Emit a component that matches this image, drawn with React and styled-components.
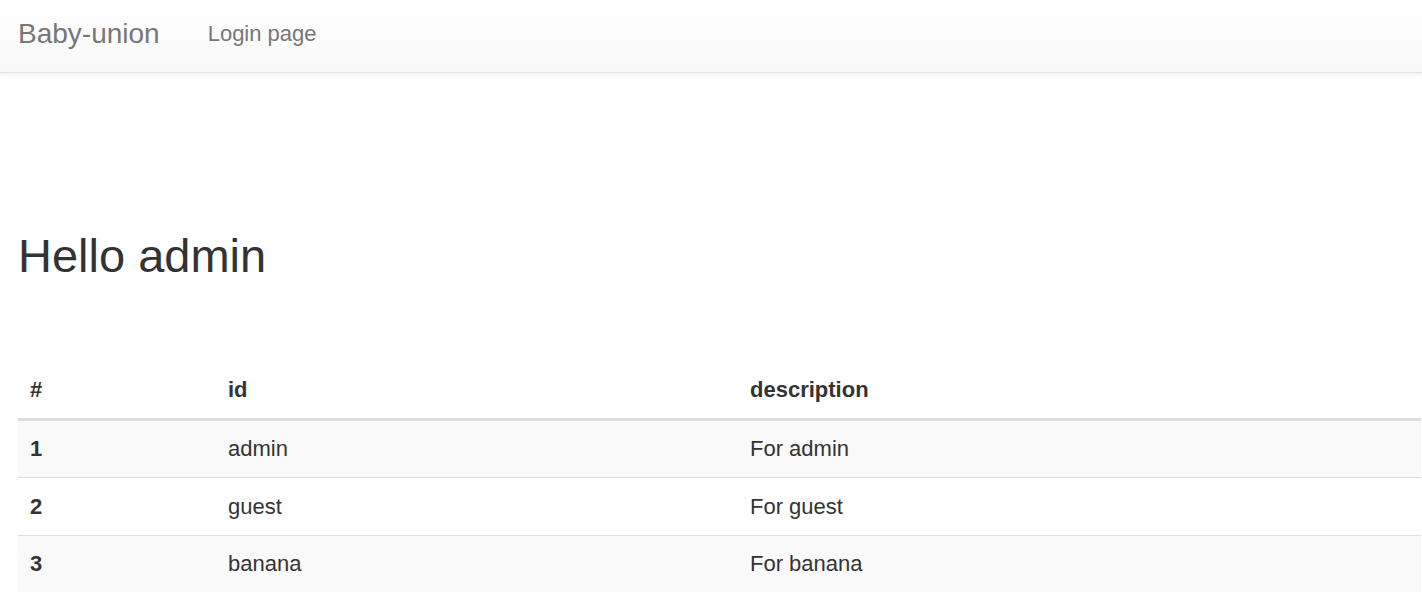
import React from 'react';
import styled, { createGlobalStyle } from 'styled-components';

const GlobalStyle = createGlobalStyle`
  html, body {
    margin: 0;
    padding: 0;
    background: #fff;
  }
  body {
    font-family: 'Liberation Sans', Arial, sans-serif;
    color: #333;
  }
`;

const Navbar = styled.nav`
  display: flex;
  align-items: flex-start;
  height: 72px;
  padding-left: 18px;
  background-image: linear-gradient(to bottom, #ffffff 0%, #f8f8f8 100%);
  border-bottom: 1px solid #e4e4e4;
  box-shadow: inset 0 1px 0 rgba(255, 255, 255, 0.15), 0 1px 5px rgba(0, 0, 0, 0.075);
`;

const Brand = styled.a`
  padding-top: 20px;
  font-size: 28px;
  line-height: 28px;
  color: #777;
  text-decoration: none;
`;

const NavLink = styled.a`
  margin-left: 48px;
  padding-top: 23px;
  font-size: 22px;
  line-height: 22px;
  color: #777;
  text-decoration: none;
`;

const Main = styled.main`
  padding: 0 1px 0 18px;
`;

const Title = styled.h1`
  margin: 157px 0 79.5px;
  font-size: 47px;
  font-weight: 400;
  line-height: 1.1;
  color: #333;
`;

const Table = styled.table`
  width: 100%;
  border-collapse: collapse;
  border-spacing: 0;
  font-size: 22px;
  line-height: 31.5px;
  table-layout: fixed;
`;

const HeadCell = styled.th`
  box-sizing: border-box;
  width: ${({ $width }) => $width || 'auto'};
  padding: 12.5px 12px;
  text-align: left;
  font-weight: 700;
  vertical-align: bottom;
  border-bottom: 3px solid #ddd;
`;

const Row = styled.tr`
  background: ${({ $striped }) => ($striped ? '#f9f9f9' : '#fff')};
`;

const RowHead = styled.th`
  padding: 12.5px 12px;
  text-align: left;
  font-weight: 700;
  border-top: ${({ $divided }) => ($divided ? '1px solid #ddd' : 'none')};
`;

const Cell = styled.td`
  padding: 12.5px 12px;
  border-top: ${({ $divided }) => ($divided ? '1px solid #ddd' : 'none')};
`;

const roles = [
  { id: 'admin', description: 'For admin' },
  { id: 'guest', description: 'For guest' },
  { id: 'banana', description: 'For banana' },
];

export default function App() {
  return (
    <>
      <GlobalStyle />
      <Navbar>
        <Brand href="#">Baby-union</Brand>
        <NavLink href="#">Login page</NavLink>
      </Navbar>
      <Main>
        <Title>Hello admin</Title>
        <Table>
          <thead>
            <tr>
              <HeadCell $width="198px">#</HeadCell>
              <HeadCell $width="522px">id</HeadCell>
              <HeadCell>description</HeadCell>
            </tr>
          </thead>
          <tbody>
            {roles.map((role, i) => (
              <Row key={role.id} $striped={i % 2 === 0}>
                <RowHead scope="row" $divided={i > 0}>{i + 1}</RowHead>
                <Cell $divided={i > 0}>{role.id}</Cell>
                <Cell $divided={i > 0}>{role.description}</Cell>
              </Row>
            ))}
          </tbody>
        </Table>
      </Main>
    </>
  );
}
